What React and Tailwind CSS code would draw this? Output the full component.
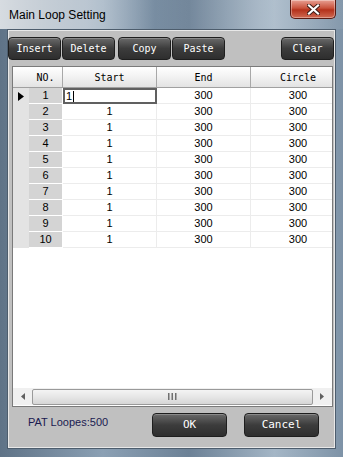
import React from 'react'

const rows = [1, 2, 3, 4, 5, 6, 7, 8, 9, 10]

const mono = { fontFamily: '"DejaVu Sans Mono", "Liberation Mono", monospace' }

const ToolButton = ({ label, className = '' }) => (
  <button
    className={`h-[23px] w-[53px] rounded-[4px] border border-[#1e1e1e] bg-[linear-gradient(to_bottom,#6a6a6a,#3c3c3c_50%,#2e2e2e)] text-[10px] text-white shadow-[inset_0_1px_0_#8a8a8a] ${className}`}
    style={mono}
  >
    {label}
  </button>
)

const App = () => {
  return (
    <div
      className="flex h-[457px] w-[343px] flex-col bg-[linear-gradient(to_right,#5f7387,#8ba0b4_30%,#6c8196_55%,#a4b6c6_80%,#7e93a7)]"
      style={{ fontFamily: '"Liberation Sans", Arial, sans-serif' }}
    >
      {/* title bar */}
      <div className="relative flex h-[29px] shrink-0 items-center bg-[linear-gradient(to_right,rgba(255,255,255,0.75),rgba(255,255,255,0.45)_25%,rgba(255,255,255,0)_45%,rgba(255,255,255,0.15)_75%,rgba(255,255,255,0.05))] pl-[9px]">
        <span className="text-[12px] text-black">Main Loop Setting</span>
        <div className="absolute right-[7px] top-0 flex h-[19px] w-[46px] items-center justify-center rounded-b-[5px] border border-t-0 border-[#5a1a12] bg-[linear-gradient(to_bottom,#e8a093,#c9523c_45%,#b4311b_55%,#d06a52)] shadow-[inset_0_0_0_1px_rgba(255,255,255,0.35)]">
          <svg width="13" height="11" viewBox="0 0 13 11">
            <path d="M2 1.5 L11 9.5 M11 1.5 L2 9.5" stroke="#3a1a14" strokeWidth="4" strokeLinecap="square" />
            <path d="M2 1.5 L11 9.5 M11 1.5 L2 9.5" stroke="#ffffff" strokeWidth="2.2" strokeLinecap="square" />
          </svg>
        </div>
      </div>

      {/* client area */}
      <div className="mx-[7px] mb-[8px] flex flex-1 flex-col border border-[#4d5d6d] bg-[#c0c0c0] shadow-[inset_0_0_0_1px_#e8e8e8]">
        <div className="mt-[7px] flex pr-[1px]">
          <ToolButton label="Insert" />
          <ToolButton label="Delete" className="ml-[1px]" />
          <ToolButton label="Copy" className="ml-[3px]" />
          <ToolButton label="Paste" className="ml-[1px]" />
          <ToolButton label="Clear" className="ml-auto" />
        </div>

        {/* grid */}
        <div className="ml-[4px] mr-[2px] mt-[6px] flex h-[341px] flex-col overflow-hidden border border-[#7a7a7a] bg-white">
          <div className="flex h-[21px] shrink-0 border-b border-[#a0a0a0] bg-[linear-gradient(to_bottom,#ffffff,#f2f2f2_50%,#e3e3e3)] text-[10px] text-black" style={mono}>
            <div className="w-[16px] shrink-0" />
            <div className="flex w-[34px] shrink-0 items-center justify-center border-r border-[#a8a8a8]">NO.</div>
            <div className="flex w-[94px] shrink-0 items-center justify-center border-r border-[#a8a8a8]">Start</div>
            <div className="flex w-[94px] shrink-0 items-center justify-center border-r border-[#a8a8a8]">End</div>
            <div className="flex w-[94px] shrink-0 items-center justify-center">Circle</div>
          </div>

          {rows.map((n) => (
            <div key={n} className="flex h-[16px] shrink-0 text-[11px] text-black">
              <div className="flex w-[16px] shrink-0 items-center justify-center bg-[#e3e3e3]">
                {n === 1 && (
                  <svg width="6" height="9" viewBox="0 0 6 9">
                    <path d="M0 0 L6 4.5 L0 9 Z" fill="#000" />
                  </svg>
                )}
              </div>
              <div className="flex w-[34px] shrink-0 items-center justify-center border-b border-r border-white bg-[#d4d4d4]">{n}</div>
              {n === 1 ? (
                <div className="flex w-[94px] shrink-0 items-center border-2 border-[#606060] pl-[1px] leading-none">
                  1<span className="ml-[1px] inline-block h-[11px] w-[1px] bg-black" />
                </div>
              ) : (
                <div className="flex w-[94px] shrink-0 items-center justify-center border-b border-r border-[#ececec]">1</div>
              )}
              <div className="flex w-[94px] shrink-0 items-center justify-center border-b border-r border-[#ececec]">300</div>
              <div className="flex w-[94px] shrink-0 items-center justify-center border-b border-[#ececec]">300</div>
            </div>
          ))}

          <div className="flex-1" />

          {/* horizontal scrollbar */}
          <div className="mb-[1px] flex h-[17px] shrink-0 items-center bg-[#f0f0f0] px-[1px]">
            <div className="flex w-[18px] items-center justify-center">
              <svg width="4" height="7" viewBox="0 0 4 7"><path d="M4 0 L0 3.5 L4 7 Z" fill="#606060" /></svg>
            </div>
            <div className="flex h-[16px] flex-1 items-center justify-center rounded-[2px] border border-[#9a9a9a] bg-[linear-gradient(to_bottom,#f4f4f4,#e6e6e6_50%,#d6d6d6)]">
              <svg width="9" height="7" viewBox="0 0 9 7">
                <rect x="0" y="0" width="1.5" height="7" fill="#707070" />
                <rect x="3.5" y="0" width="1.5" height="7" fill="#707070" />
                <rect x="7" y="0" width="1.5" height="7" fill="#707070" />
              </svg>
            </div>
            <div className="flex w-[18px] items-center justify-center">
              <svg width="4" height="7" viewBox="0 0 4 7"><path d="M0 0 L4 3.5 L0 7 Z" fill="#606060" /></svg>
            </div>
          </div>
        </div>

        {/* footer */}
        <div className="mt-[6px] flex items-start pl-[20px] pr-[16px]">
          <span className="mt-[1px] text-[11px] text-[#1a1a50]">PAT Loopes:500</span>
          <ToolButton label="OK" className="ml-auto !h-[24px] !w-[75px] !text-[11px]" />
          <ToolButton label="Cancel" className="ml-[17px] !h-[24px] !w-[75px] !text-[11px]" />
        </div>
      </div>
    </div>
  )
}

export default App
